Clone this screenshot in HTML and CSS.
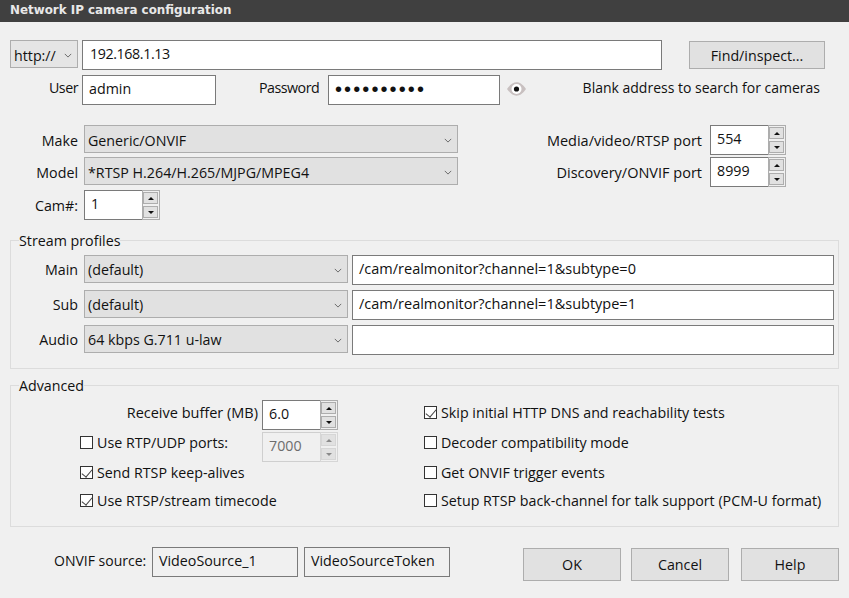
FILE: index.html
```html
<!DOCTYPE html>
<html lang="en">
<head>
  <meta charset="UTF-8">
  <title>Network IP camera configuration</title>
  <link rel="stylesheet" href="styles.css">
</head>
<body>
  <div class="titlebar">Network IP camera configuration</div>

  <div class="dialog">
    <div class="address-row">
      <div class="combo combo-scheme"><span>http://</span><svg class="chevron" viewBox="0 0 10 6"><path d="M1 1l4 4 4-4"/></svg></div>
      <div class="field field-address">192.168.1.13</div>
      <div class="button button-find">Find/inspect...</div>
    </div>

    <div class="login-row">
      <label class="label label-side label-user">User</label>
      <div class="field field-user">admin</div>
      <label class="label label-password">Password</label>
      <div class="field field-password">••••••••••</div>
      <svg class="eye" viewBox="0 0 19 14">
        <path d="M0 7C3.5 2 6.5 0.3 9.5 0.3S15.500 2 19 7C15.500 12 12.500 13.700 9.500 13.700S3.500 12 0 7Z" fill="#c8c0c0"/>
        <circle cx="9.500" cy="7" r="5" fill="#fff"/>
        <circle cx="9.500" cy="7" r="2.600" fill="#111"/>
      </svg>
      <div class="hint">Blank address to search for cameras</div>
    </div>

    <div class="device-row device-first">
      <label class="label label-side">Make</label>
      <div class="combo combo-device"><span>Generic/ONVIF</span><svg class="chevron" viewBox="0 0 10 6"><path d="M1 1l4 4 4-4"/></svg></div>
      <div class="port">
        <label class="label label-wide">Media/video/RTSP port</label>
        <div class="spin">
          <div class="spin-value">554</div>
          <div class="spin-arrows"><div class="arrow arrow-up"></div><div class="arrow arrow-down"></div></div>
        </div>
      </div>
    </div>
    <div class="device-row">
      <label class="label label-side">Model</label>
      <div class="combo combo-device"><span>*RTSP H.264/H.265/MJPG/MPEG4</span><svg class="chevron" viewBox="0 0 10 6"><path d="M1 1l4 4 4-4"/></svg></div>
      <div class="port">
        <label class="label label-wide">Discovery/ONVIF port</label>
        <div class="spin">
          <div class="spin-value">8999</div>
          <div class="spin-arrows"><div class="arrow arrow-up"></div><div class="arrow arrow-down"></div></div>
        </div>
      </div>
    </div>
    <div class="device-row device-cam">
      <label class="label label-side">Cam#:</label>
      <div class="spin">
        <div class="spin-value">1</div>
        <div class="spin-arrows"><div class="arrow arrow-up"></div><div class="arrow arrow-down"></div></div>
      </div>
    </div>

    <fieldset class="group group-stream">
      <legend>Stream profiles</legend>
      <div class="stream-row">
        <label class="label label-stream">Main</label>
        <div class="combo combo-stream"><span>(default)</span><svg class="chevron" viewBox="0 0 10 6"><path d="M1 1l4 4 4-4"/></svg></div>
        <div class="field field-stream">/cam/realmonitor?channel=1&amp;subtype=0</div>
      </div>
      <div class="stream-row">
        <label class="label label-stream">Sub</label>
        <div class="combo combo-stream"><span>(default)</span><svg class="chevron" viewBox="0 0 10 6"><path d="M1 1l4 4 4-4"/></svg></div>
        <div class="field field-stream">/cam/realmonitor?channel=1&amp;subtype=1</div>
      </div>
      <div class="stream-row">
        <label class="label label-stream">Audio</label>
        <div class="combo combo-stream"><span>64 kbps G.711 u-law</span><svg class="chevron" viewBox="0 0 10 6"><path d="M1 1l4 4 4-4"/></svg></div>
        <div class="field field-stream"></div>
      </div>
    </fieldset>

    <fieldset class="group group-advanced">
      <legend>Advanced</legend>
      <div class="advanced-grid">
        <div class="adv-left adv-buffer">
          <label class="label label-wide">Receive buffer (MB)</label>
          <div class="spin">
            <div class="spin-value">6.0</div>
            <div class="spin-arrows"><div class="arrow arrow-up"></div><div class="arrow arrow-down"></div></div>
          </div>
        </div>
        <div class="check check-first"><span class="box box-on"></span>Skip initial HTTP DNS and reachability tests</div>

        <div class="adv-left adv-ports">
          <div class="check"><span class="box"></span>Use RTP/UDP ports:</div>
          <div class="spin spin-disabled">
            <div class="spin-value">7000</div>
            <div class="spin-arrows"><div class="arrow arrow-up"></div><div class="arrow arrow-down"></div></div>
          </div>
        </div>
        <div class="check"><span class="box"></span>Decoder compatibility mode</div>

        <div class="adv-left"><div class="check"><span class="box box-on"></span>Send RTSP keep-alives</div></div>
        <div class="check"><span class="box"></span>Get ONVIF trigger events</div>

        <div class="adv-left"><div class="check"><span class="box box-on"></span>Use RTSP/stream timecode</div></div>
        <div class="check"><span class="box"></span>Setup RTSP back-channel for talk support (PCM-U format)</div>
      </div>
    </fieldset>

    <div class="footer-row">
      <label class="label label-onvif">ONVIF source:</label>
      <div class="field field-readonly">VideoSource_1</div>
      <div class="field field-readonly">VideoSourceToken</div>
      <div class="footer-buttons">
        <div class="button button-ok">OK</div>
        <div class="button button-cancel">Cancel</div>
        <div class="button button-help">Help</div>
      </div>
    </div>
  </div>
</body>
</html>
```

FILE: styles.css
```css
* {
  box-sizing: border-box;
}

html, body {
  margin: 0;
  padding: 0;
  height: 100%;
  overflow: hidden;
}

body {
  background-color: #f0f0f0;
  color: #111;
  font-family: "Open Sans", "Noto Sans", sans-serif;
  font-size: 14.25px;
}

.titlebar {
  height: 22px;
  padding-left: 10px;
  background-color: #404040;
  color: #e8e8e8;
  font-family: "DejaVu Sans", sans-serif;
  font-size: 11.9px;
  font-weight: bold;
  line-height: 20px;
}

.dialog {
  padding: 18px 10px 0;
}

.label {
  white-space: nowrap;
}

.label-side {
  width: 68px;
  text-align: right;
}

.label-wide {
  font-size: 14.5px;
}

.label-user {
  letter-spacing: -0.5px;
}

/* text boxes */
.field {
  height: 30px;
  padding: 0 6px;
  border: 1px solid #7a7a7a;
  background-color: #fff;
  line-height: 26px;
  white-space: nowrap;
}

.field-address {
  width: 580px;
  margin-left: 4px;
  padding-left: 7px;
  letter-spacing: -0.4px;
}

.field-user {
  width: 134px;
  margin-left: 4px;
}

.field-password {
  width: 172px;
  margin-left: 9px;
  letter-spacing: 2.1px;
  font-family: "Liberation Sans", sans-serif;
  font-size: 20px;
}

.field-stream {
  width: 482px;
  margin-left: 4px;
  font-size: 14.5px;
}

.field-readonly {
  width: 146px;
  background-color: #f0f0f0;
}

/* drop downs */
.combo {
  display: flex;
  align-items: center;
  justify-content: space-between;
  height: 28px;
  padding: 2px 5px 0 3px;
  border: 1px solid #adadad;
  background-color: #e1e1e1;
  white-space: nowrap;
}

.chevron {
  width: 8px;
  height: 5px;
  flex: none;
  fill: none;
  stroke: #666;
  stroke-width: 1.2;
}

.combo-scheme {
  width: 68px;
  background-color: #e5e5e5;
}

.combo-device {
  width: 374px;
  margin-left: 6px;
}

.combo-stream {
  width: 264px;
  margin-left: 6px;
}

/* buttons */
.button {
  display: flex;
  align-items: center;
  justify-content: center;
  border: 1px solid #adadad;
  background-color: #e1e1e1;
}

.button-find {
  width: 136px;
  height: 28px;
  margin: 1px 0 0 27px;
}

.footer-buttons {
  display: flex;
  margin: 1px 0 0 auto;
}

.footer-buttons .button {
  width: 98px;
  height: 33px;
}

.button-cancel {
  margin-left: 10px;
}

.button-help {
  margin-left: 12px;
}

/* spin boxes */
.spin {
  display: flex;
  width: 76px;
  height: 30px;
  flex: none;
}

.spin-value {
  flex: 1;
  padding-left: 6px;
  border: 1px solid #7a7a7a;
  border-right: 0;
  background-color: #fff;
  line-height: 26px;
}

.spin-arrows {
  display: flex;
  flex-direction: column;
  gap: 2px;
  width: 18px;
  padding: 1px 1px 1px 0;
  border: 1px solid #adadad;
  background-color: #f0f0f0;
}

.arrow {
  flex: 1;
  display: flex;
  align-items: center;
  justify-content: center;
  border: 1px solid #adadad;
  background-color: #e1e1e1;
}

.arrow::after {
  content: "";
  border-left: 3px solid transparent;
  border-right: 3px solid transparent;
}

.arrow-up::after {
  border-bottom: 3px solid #111;
}

.arrow-down::after {
  border-top: 3px solid #111;
}

.spin-disabled .spin-value {
  border-color: #cfcfcf;
  border-right: 0;
  background-color: #f0f0f0;
  color: #6d6d6d;
}

.spin-disabled .spin-arrows,
.spin-disabled .arrow {
  border-color: #d6d6d6;
}

.spin-disabled .arrow-up::after {
  border-bottom-color: #8a8a8a;
}

.spin-disabled .arrow-down::after {
  border-top-color: #8a8a8a;
}

/* rows */
.address-row,
.login-row,
.device-row,
.stream-row,
.footer-row {
  display: flex;
  align-items: flex-start;
}

.login-row {
  margin-top: 5px;
  line-height: 25px;
}

.label-password {
  width: 60px;
  margin-left: 43px;
  letter-spacing: -0.5px;
}

.eye {
  width: 19px;
  height: 14px;
  margin: 7px 0 0 7px;
}

.hint {
  margin: 0 19px 0 auto;
  font-size: 14px;
}

.device-row {
  height: 32px;
  line-height: 31px;
}

.device-first {
  margin-top: 20px;
}

.device-cam {
  height: 30px;
  margin-top: 1px;
}

.device-cam .spin {
  margin-left: 6px;
}

.port {
  display: flex;
  gap: 8px;
  margin: 0 53px 0 auto;
}

/* group boxes */
.group {
  margin: 0;
  padding: 5px 0 0;
  border: 1px solid #dcdcdc;
  min-width: 0;
}

.group legend {
  height: 19px;
  margin-left: 8px;
  padding: 0;
  line-height: 19px;
  background-color: #f0f0f0;
}

.group-stream {
  margin-top: 11px;
  padding-bottom: 13px;
}

.group-advanced {
  margin-top: 7px;
  padding-bottom: 14px;
}

.stream-row {
  height: 35px;
  line-height: 30px;
}

.stream-row .field {
  line-height: 26px;
}

.stream-row:last-child {
  height: 30px;
}

.label-stream {
  width: 67px;
  text-align: right;
}

/* advanced options */
.advanced-grid {
  display: grid;
  grid-template-columns: 327px 1fr;
  grid-template-rows: 31px 30px 28px 23px;
  column-gap: 86px;
  align-items: start;
}

.adv-left {
  display: flex;
  justify-content: flex-end;
}

.adv-left > .check {
  margin-right: auto;
  margin-left: 69px;
}

.adv-buffer {
  gap: 4px;
  line-height: 26px;
}

.adv-ports .spin {
  margin-top: 1px;
}

.check {
  display: flex;
  align-items: center;
  gap: 4px;
  height: 22px;
  white-space: nowrap;
}

.check-first {
  margin-top: 1px;
}

.box {
  position: relative;
  width: 13px;
  height: 13px;
  flex: none;
  border: 1px solid #333;
  background-color: #fff;
}

.box-on::after {
  content: "";
  position: absolute;
  left: 3px;
  top: 0;
  width: 5px;
  height: 9px;
  border: solid #444;
  border-width: 0 1px 1px 0;
  transform: rotate(40deg);
}

.footer-row {
  margin-top: 20px;
  padding-left: 44px;
  line-height: 28px;
}

.label-onvif {
  width: 92px;
  margin-right: 6px;
  font-size: 14px;
}

.footer-row .field + .field {
  margin-left: 6px;
}
```
